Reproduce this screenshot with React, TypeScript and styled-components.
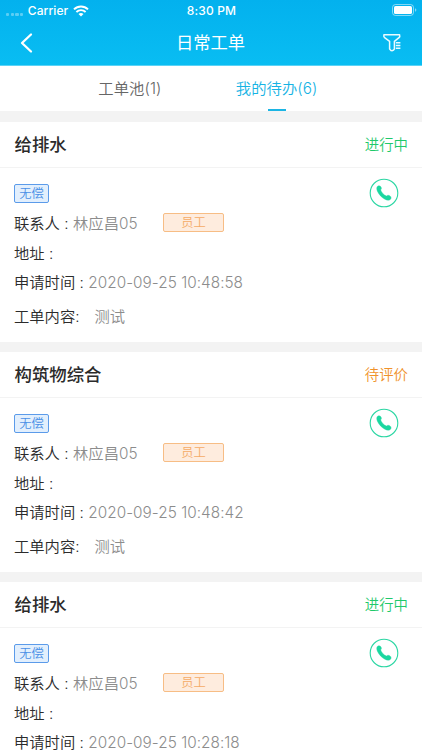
import React from 'react';
import styled, { createGlobalStyle } from 'styled-components';

const GlobalStyle = createGlobalStyle`
  * { box-sizing: border-box; }
  html, body { margin: 0; padding: 0; }
  body {
    background: #f3f3f3;
    color: #2b2b2b;
    font-family: Inter, "Noto Sans CJK SC", sans-serif;
    font-size: 15.3px;
    font-weight: 350;
    overflow: hidden;
  }
`;

const Screen = styled.div`
  width: 422px;
  height: 750px;
  overflow: hidden;
  display: flex;
  flex-direction: column;
`;

const Header = styled.header`
  flex: none;
  height: 66px;
  background: linear-gradient(#03b1ee, #09bdf2);
  border-bottom: 1px solid #5bd3f6;
  color: #fff;
`;

const StatusBar = styled.div`
  height: 21px;
  padding: 0 5px 0 6px;
  display: grid;
  grid-template-columns: 1fr auto 1fr;
  align-items: center;
  font-size: 12px;
  font-weight: 500;
  line-height: 21px;
`;

const Carrier = styled.div`
  display: flex;
  align-items: center;
  letter-spacing: 0.1px;
`;

const Signal = styled.div`
  display: flex;
  gap: 1.5px;
  margin: 7px 4.5px 0 0;
`;

const Dot = styled.i`
  width: 3.2px;
  height: 3px;
  border-radius: 1px;
  background: rgba(255, 255, 255, 0.35);
`;

const Wifi = styled.svg`
  margin-left: 5px;
`;

const Clock = styled.div`
  letter-spacing: 0.15px;
`;

const Battery = styled.svg`
  justify-self: end;
  margin-top: -1px;
`;

const NavBar = styled.div`
  height: 44px;
  padding: 0 20px 0 19px;
  display: grid;
  grid-template-columns: 1fr auto 1fr;
  align-items: center;
`;

const NavTitle = styled.h1`
  margin: 0;
  font-size: 17.3px;
  font-weight: 400;
  line-height: 44px;
`;

const BackIcon = styled.svg`
  display: block;
`;

const FilterIcon = styled.svg`
  display: block;
  justify-self: end;
`;

const Tabs = styled.nav`
  flex: none;
  height: 45px;
  margin-bottom: 10.5px;
  padding: 0 72px 0 56.5px;
  display: grid;
  grid-template-columns: 1fr 1fr;
  background: #fff;
`;

const Tab = styled.div<{ $active?: boolean }>`
  display: flex;
  flex-direction: column;
  align-items: center;
  justify-content: space-between;
  line-height: 45px;
  letter-spacing: 0.1px;
  color: ${(p) => (p.$active ? '#16b3e4' : '#666')};
  &::after {
    content: '';
    width: 18px;
    height: 2px;
    margin-top: -2px;
    background: ${(p) => (p.$active ? '#1cb5e4' : 'transparent')};
  }
`;

const Card = styled.article`
  flex: none;
  height: 220.5px;
  margin-bottom: 9.5px;
  background: #fff;
`;

const CardHead = styled.div`
  height: 46px;
  padding: 0 14px 0 14.5px;
  display: flex;
  align-items: center;
  justify-content: space-between;
  border-bottom: 1px solid #f3f3f3;
`;

const CardTitle = styled.h2`
  margin: 0;
  padding-top: 1px;
  font-size: 17.4px;
  font-weight: 500;
  line-height: 45px;
`;

const Status = styled.span<{ $tone: string }>`
  font-size: 14.4px;
  line-height: 45px;
  padding-top: 1px;
  color: ${(p) => p.$tone};
`;

const CardBody = styled.div`
  padding: 10.5px 23px 0 14px;
  display: flex;
  flex-direction: column;
`;

const TopRow = styled.div`
  height: 30px;
  display: flex;
  align-items: center;
  justify-content: space-between;
`;

const FeeTag = styled.span`
  width: 35px;
  height: 19px;
  border: 1px solid #5b9bea;
  border-radius: 2px;
  background: #e2effd;
  color: #4a8fe6;
  font-size: 12.3px;
  line-height: 17px;
  text-align: center;
`;

const Row = styled.div<{ $h: number; $lead?: number }>`
  height: ${(p) => p.$h}px;
  line-height: ${(p) => p.$lead ?? p.$h}px;
  display: flex;
  align-items: baseline;
  white-space: pre;
`;

const Label = styled.span`
  white-space: pre;
`;

const Value = styled.span<{ $gap?: number }>`
  margin-left: ${(p) => p.$gap ?? 4.5}px;
  color: #8c8c8c;
  letter-spacing: 0.04px;
`;

const Contact = styled(Value)`
  width: 90px;
`;

const RoleTag = styled.span`
  align-self: center;
  width: 61px;
  height: 19px;
  margin-top: -2px;
  border: 1px solid #f7bd85;
  border-radius: 2px;
  background: #feecde;
  color: #f5ab66;
  font-size: 12.3px;
  line-height: 17px;
  text-align: center;
`;

function PhoneIcon() {
  return (
    <svg width="30" height="30" viewBox="0 0 30 30">
      <circle cx="15" cy="15" r="13.8" fill="none" stroke="#2bd6a3" strokeWidth="1.1" />
      <path
        d="M8.3 8.5C9.2 7.4 11 7.5 11.9 8.8C12.7 10 12.6 11.1 11.6 11.8C12.5 14.6 14.6 16.9 17.5 18.1C18.3 17.1 19.7 17 21 17.9C22.3 18.9 22.4 20.2 21.5 21.3C20.3 22.6 18 22.5 15.5 21C12.4 19.2 9.8 16.5 8.4 13.2C7.6 11.3 7.5 9.6 8.3 8.5Z"
        fill="#1bd7a0"
        stroke="#1bd7a0"
        strokeWidth="0.4"
      />
    </svg>
  );
}

interface Order {
  title: string;
  status: string;
  tone: string;
  time: string;
}

const orders: Order[] = [
  { title: '给排水', status: '进行中', tone: '#1fc96b', time: '2020-09-25 10:48:58' },
  { title: '构筑物综合', status: '待评价', tone: '#f0922b', time: '2020-09-25 10:48:42' },
  { title: '给排水', status: '进行中', tone: '#1fc96b', time: '2020-09-25 10:28:18' },
];

function OrderCard({ order }: { order: Order }) {
  return (
    <Card>
      <CardHead>
        <CardTitle>{order.title}</CardTitle>
        <Status $tone={order.tone}>{order.status}</Status>
      </CardHead>
      <CardBody>
        <TopRow>
          <FeeTag>无偿</FeeTag>
          <PhoneIcon />
        </TopRow>
        <Row $h={30} $lead={32}>
          <Label>联系人 :</Label>
          <Contact>林应昌05</Contact>
          <RoleTag>员工</RoleTag>
        </Row>
        <Row $h={29.5} $lead={31.5}>
          <Label>地址 :</Label>
        </Row>
        <Row $h={29.5}>
          <Label>申请时间 :</Label>
          <Value>{order.time}</Value>
        </Row>
        <Row $h={38} $lead={40}>
          <Label>工单内容:</Label>
          <Value $gap={15}>测试</Value>
        </Row>
      </CardBody>
    </Card>
  );
}

export default function App() {
  return (
    <>
      <GlobalStyle />
      <Screen>
        <Header>
          <StatusBar>
            <Carrier>
              <Signal>
                <Dot />
                <Dot />
                <Dot />
                <Dot />
              </Signal>
              Carrier
              <Wifi width="16" height="12" viewBox="0 0 16 12">
                <path d="M1 4.4A10 10 0 0 1 15 4.4" fill="none" stroke="#fff" strokeWidth="2" />
                <path d="M3.4 7A6.6 6.6 0 0 1 12.6 7" fill="none" stroke="#fff" strokeWidth="1.9" />
                <path d="M5.5 9.1A3.6 3.6 0 0 1 10.5 9.1L8 11.6Z" fill="#fff" />
              </Wifi>
            </Carrier>
            <Clock>8:30 PM</Clock>
            <Battery width="25" height="12" viewBox="0 0 25 12">
              <rect x="0.5" y="0.5" width="21" height="11" rx="3" fill="none" stroke="#fff" strokeOpacity="0.5" />
              <rect x="2" y="2" width="18" height="8" rx="1.6" fill="#fff" />
              <path d="M23 4.2Q24.4 4.8 24.4 6Q24.4 7.2 23 7.8Z" fill="#fff" fillOpacity="0.5" />
            </Battery>
          </StatusBar>
          <NavBar>
            <BackIcon width="14" height="22" viewBox="0 0 14 22">
              <path d="M12 2.5L3 11L12 19.5" fill="none" stroke="#fff" strokeWidth="2.3" strokeLinecap="round" strokeLinejoin="round" />
            </BackIcon>
            <NavTitle>日常工单</NavTitle>
            <FilterIcon width="20" height="20" viewBox="0 0 20 20">
              <path
                d="M1.9 1.7H17.6Q18.2 3.4 17 4.7L12.4 8.4V16.1Q11.6 18.2 9 17.6L7.6 16V8.4L2.6 4.7Q1.4 3.4 1.9 1.7Z"
                fill="none"
                stroke="#e9fbff"
                strokeWidth="1.5"
                strokeLinejoin="round"
              />
              <path d="M13.8 9.8H18.4M13.8 12.5H18.4M13.8 15.2H18.4" stroke="#e9fbff" strokeWidth="1.4" />
            </FilterIcon>
          </NavBar>
        </Header>
        <Tabs>
          <Tab>工单池(1)</Tab>
          <Tab $active>我的待办(6)</Tab>
        </Tabs>
        {orders.map((order, i) => (
          <OrderCard key={i} order={order} />
        ))}
      </Screen>
    </>
  );
}
